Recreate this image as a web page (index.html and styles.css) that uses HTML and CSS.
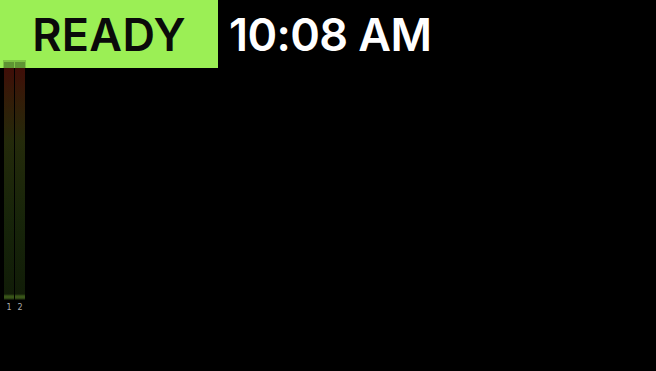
FILE: index.html
```html
<!DOCTYPE html>
<html>
<head>
<meta charset="utf-8">
<link rel="stylesheet" href="styles.css">
</head>
<body>
<div class="screen">
  <header class="topbar">
    <div class="status">READY</div>
    <div class="clock">10:08 AM</div>
  </header>
  <div class="meters">
    <div class="meter">
      <div class="bar"></div>
      <div class="label">1</div>
    </div>
    <div class="meter">
      <div class="bar"></div>
      <div class="label">2</div>
    </div>
  </div>
</div>
</body>
</html>
```
FILE: styles.css
```css
html, body {
  margin: 0;
  padding: 0;
  background: #000;
}
.screen {
  position: relative;
  width: 656px;
  height: 371px;
  background: #000;
  overflow: hidden;
  font-family: Inter, "Liberation Sans", sans-serif;
}
.topbar {
  display: flex;
  align-items: center;
  height: 68px;
}
.status {
  width: 218px;
  height: 68px;
  background: #9bef55;
  color: #0a0a0a;
  font-size: 45px;
  font-weight: 600;
  display: flex;
  align-items: center;
  justify-content: center;
  letter-spacing: 0.3px;
}
.clock {
  color: #fff;
  font-size: 45px;
  font-weight: 600;
  margin-left: 11px;
  letter-spacing: -0.6px;
}
.meters {
  position: absolute;
  left: 3px;
  top: 60px;
  display: flex;
  gap: 1px;
  padding: 2px 1px 0;
  background: rgba(0, 0, 0, 0.18);
}
.meter {
  display: flex;
  flex-direction: column;
  align-items: center;
  width: 10px;
}
.bar {
  width: 10px;
  height: 238px;
  background: linear-gradient(to bottom,
    rgba(20, 40, 10, 0.3) 0px,
    rgba(20, 40, 10, 0.3) 6px,
    rgba(160, 35, 20, 0.4) 6px,
    rgba(120, 70, 20, 0.42) 40px,
    rgba(85, 100, 25, 0.42) 80px,
    rgba(60, 95, 25, 0.38) 160px,
    rgba(45, 75, 20, 0.38) 232px,
    rgba(80, 120, 35, 0.7) 234px,
    rgba(80, 120, 35, 0.7) 236px,
    rgba(20, 30, 10, 0.3) 238px);
}
.label {
  margin-top: 3px;
  font-family: "DejaVu Sans", sans-serif;
  font-size: 8px;
  line-height: 9px;
  color: #aaa;
}
```
